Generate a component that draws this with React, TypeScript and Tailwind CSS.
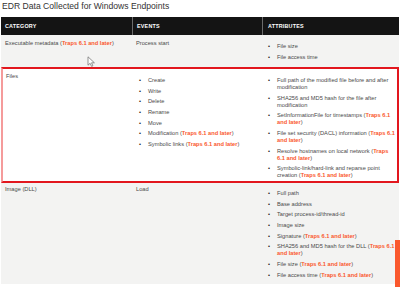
import React from "react";

const Traps = () => (
  <>
    (<span className="font-bold text-[#fa582d]">Traps 6.1 and later</span>)
  </>
);

const BulletList: React.FC<{ items: React.ReactNode[] }> = ({ items }) => (
  <ul className="flex flex-col gap-[3.7px]">
    {items.map((item, i) => (
      <li key={i} className="flex leading-[7px]">
        <span className="w-[10px] shrink-0 pl-[1px] text-[#222]">•</span>
        <span>{item}</span>
      </li>
    ))}
  </ul>
);

const Cursor = () => (
  <svg
    className="absolute left-[87px] top-[56px]"
    width="9"
    height="11"
    viewBox="0 0 9 11"
  >
    <path
      d="M1 0.8 L1 9.2 L3.1 7.3 L4.6 10.4 L5.9 9.8 L4.5 6.8 L7.4 6.8 Z"
      fill="#fff"
      stroke="#777"
      strokeWidth="0.8"
      strokeLinejoin="round"
    />
  </svg>
);

export default function App() {
  return (
    <div className="relative h-[287px] w-[400px] overflow-hidden bg-white font-['Liberation_Sans',Arial,sans-serif] text-[5.7px] text-[#4a4a4a]">
      <h1 className="pl-[2px] pt-[1px] text-[8.6px] leading-[11px] text-[#333]">
        EDR Data Collected for Windows Endpoints
      </h1>

      <div className="mt-[5px] ml-[1px] mr-[1px]">
        {/* header */}
        <div className="grid h-[18px] grid-cols-[132px_130px_1fr] bg-[#141414] text-[5.4px] font-bold uppercase tracking-[0.2px] text-white">
          <div className="flex items-center border-r border-[#6b6b6b] pl-[4px]">Category</div>
          <div className="flex items-center border-r border-[#6b6b6b] pl-[4px]">Events</div>
          <div className="flex items-center pl-[5px]">Attributes</div>
        </div>

        {/* executable metadata */}
        <div className="grid h-[32px] grid-cols-[132px_130px_1fr] bg-[#f3f3f2]">
          <div className="pl-[4px] pt-[5px] leading-[7px]">
            Executable metadata <Traps />
          </div>
          <div className="pl-[3px] pt-[5px] leading-[7px]">Process start</div>
          <div className="pl-[4px] pt-[8px]">
            <BulletList items={["File size", "File access time"]} />
          </div>
        </div>

        {/* files */}
        <div className="grid h-[116px] grid-cols-[131px_130px_1fr] border-2 border-l-[#f59b9b] border-[#e2171e] bg-white">
          <div className="pl-[3px] pt-[4px] leading-[7px]">Files</div>
          <div className="pl-[4px] pt-[8px]">
            <BulletList
              items={[
                "Create",
                "Write",
                "Delete",
                "Rename",
                "Move",
                <>Modification <Traps /></>,
                <>Symbolic links <Traps /></>,
              ]}
            />
          </div>
          <div className="pl-[3px] pr-[2px] pt-[8px]">
            <BulletList
              items={[
                "Full path of the modified file before and after modification",
                "SHA256 and MD5 hash for the file after modification",
                <>SetInformationFile for timestamps <Traps /></>,
                <>File set security (DACL) information <Traps /></>,
                <>Resolve hostnames on local network <Traps /></>,
                <>Symbolic-link/hard-link and reparse point creation <Traps /></>,
              ]}
            />
          </div>
        </div>

        {/* image dll */}
        <div className="grid h-[101px] grid-cols-[132px_130px_1fr] bg-[#f3f3f2]">
          <div className="pl-[4px] pt-[3px] leading-[7px]">Image (DLL)</div>
          <div className="pl-[3px] pt-[3px] leading-[7px]">Load</div>
          <div className="pl-[4px] pr-[4px] pt-[7px]">
            <BulletList
              items={[
                "Full path",
                "Base address",
                "Target process-id/thread-id",
                "Image size",
                <>Signature <Traps /></>,
                <>SHA256 and MD5 hash for the DLL <Traps /></>,
                <>File size <Traps /></>,
                <>File access time <Traps /></>,
              ]}
            />
          </div>
        </div>
      </div>

      <div className="absolute right-0 top-[240px] h-[47px] w-[5px] bg-[#fa582d]" />
      <Cursor />
    </div>
  );
}
